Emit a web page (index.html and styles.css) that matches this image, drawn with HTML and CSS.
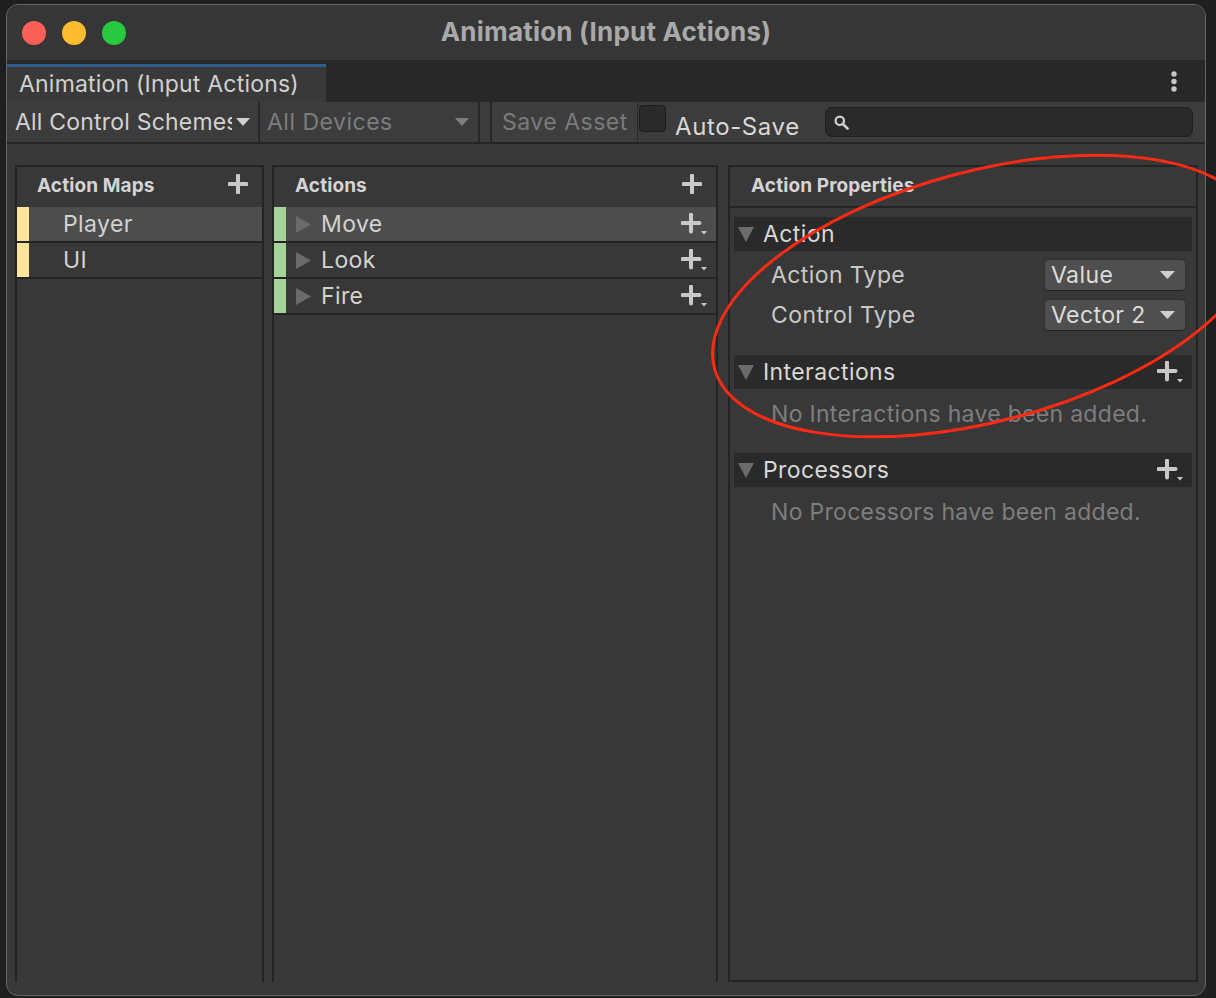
FILE: index.html
```html
<!DOCTYPE html>
<html lang="en">
<head>
<meta charset="utf-8">
<title>Animation (Input Actions)</title>
<link rel="stylesheet" href="styles.css">
</head>
<body>
<div class="window">
  <header class="titlebar">
    <div class="lights">
      <span class="light red"></span><span class="light yellow"></span><span class="light green"></span>
    </div>
    <div class="title">Animation (Input Actions)</div>
    <div></div>
  </header>

  <div class="tabbar">
    <div class="tab">Animation (Input Actions)</div>
    <svg class="kebab" width="6" height="21" viewBox="0 0 6 21"><circle cx="3" cy="3" r="2.7" fill="#c8c8c8"/><circle cx="3" cy="10.5" r="2.7" fill="#c8c8c8"/><circle cx="3" cy="18" r="2.7" fill="#c8c8c8"/></svg>
  </div>

  <div class="toolbar">
    <div class="tb-item schemes">
      <span class="tb-label">All Control Schemes</span>
      <svg class="arrow" width="14" height="8" viewBox="0 0 14 8"><polygon points="0,0 14,0 7,8" fill="#d0d0d0"/></svg>
    </div>
    <div class="tb-item devices">
      <span>All Devices</span>
      <svg class="arrow" width="14" height="8" viewBox="0 0 14 8"><polygon points="0,0 14,0 7,8" fill="#7e7e7e"/></svg>
    </div>
    <div class="tb-spacer"></div>
    <div class="tb-item save">Save Asset</div>
    <span class="checkbox"></span>
    <span class="autosave">Auto-Save</span>
    <div class="search">
      <svg width="15" height="15" viewBox="0 0 15 15"><circle cx="5.8" cy="5.8" r="4.2" fill="none" stroke="#cfcfcf" stroke-width="2.2"/><line x1="8.8" y1="8.8" x2="13.5" y2="13.5" stroke="#cfcfcf" stroke-width="2.6" stroke-linecap="round"/></svg>
    </div>
  </div>

  <div class="main">
    <section class="panel maps">
      <div class="panel-head">
        <span>Action Maps</span>
        <svg class="plus-head" width="20" height="20" viewBox="0 0 20 20"><path d="M10 1.5v17M1.5 10h17" stroke="#c8c8c8" stroke-width="4" stroke-linecap="round"/></svg>
      </div>
      <div class="row selected"><span class="strip map"></span><span class="map-label">Player</span></div>
      <div class="row"><span class="strip map"></span><span class="map-label">UI</span></div>
    </section>

    <section class="panel actions">
      <div class="panel-head">
        <span>Actions</span>
        <svg class="plus-head" width="20" height="20" viewBox="0 0 20 20"><path d="M10 1.5v17M1.5 10h17" stroke="#c8c8c8" stroke-width="4" stroke-linecap="round"/></svg>
      </div>
      <div class="row selected">
        <span class="strip act"></span>
        <svg class="fold-right" width="15" height="17" viewBox="0 0 15 17"><polygon points="0,0 15,8.5 0,17" fill="#6b6b6b"/></svg>
        <span class="act-label">Move</span>
        <svg class="plus-drop" width="26" height="22" viewBox="0 0 26 22"><path d="M10 1.5v17M1.5 10h17" stroke="#c8c8c8" stroke-width="4" stroke-linecap="round"/><polygon points="20,18 26,18 23,21.5" fill="#c8c8c8"/></svg>
      </div>
      <div class="row">
        <span class="strip act"></span>
        <svg class="fold-right" width="15" height="17" viewBox="0 0 15 17"><polygon points="0,0 15,8.5 0,17" fill="#6b6b6b"/></svg>
        <span class="act-label">Look</span>
        <svg class="plus-drop" width="26" height="22" viewBox="0 0 26 22"><path d="M10 1.5v17M1.5 10h17" stroke="#c8c8c8" stroke-width="4" stroke-linecap="round"/><polygon points="20,18 26,18 23,21.5" fill="#c8c8c8"/></svg>
      </div>
      <div class="row">
        <span class="strip act"></span>
        <svg class="fold-right" width="15" height="17" viewBox="0 0 15 17"><polygon points="0,0 15,8.5 0,17" fill="#6b6b6b"/></svg>
        <span class="act-label">Fire</span>
        <svg class="plus-drop" width="26" height="22" viewBox="0 0 26 22"><path d="M10 1.5v17M1.5 10h17" stroke="#c8c8c8" stroke-width="4" stroke-linecap="round"/><polygon points="20,18 26,18 23,21.5" fill="#c8c8c8"/></svg>
      </div>
    </section>

    <section class="panel props">
      <div class="panel-head props-head"><span>Action Properties</span></div>
      <div class="props-body">
        <div class="section">
          <div class="section-head">
            <svg class="fold-down" width="16" height="15" viewBox="0 0 16 15"><polygon points="0,0 16,0 8,15" fill="#6b6b6b"/></svg>
            <span>Action</span>
          </div>
          <div class="section-body fields">
            <div class="prop-row">
              <span>Action Type</span>
              <div class="dropdown"><span>Value</span><svg width="15" height="8" viewBox="0 0 15 8"><polygon points="0,0 15,0 7.5,8" fill="#cfcfcf"/></svg></div>
            </div>
            <div class="prop-row">
              <span>Control Type</span>
              <div class="dropdown"><span>Vector 2</span><svg width="15" height="8" viewBox="0 0 15 8"><polygon points="0,0 15,0 7.5,8" fill="#cfcfcf"/></svg></div>
            </div>
          </div>
        </div>
        <div class="section">
          <div class="section-head">
            <svg class="fold-down" width="16" height="15" viewBox="0 0 16 15"><polygon points="0,0 16,0 8,15" fill="#6b6b6b"/></svg>
            <span>Interactions</span>
            <svg class="plus-drop" width="26" height="22" viewBox="0 0 26 22"><path d="M10 1.5v17M1.5 10h17" stroke="#c8c8c8" stroke-width="4" stroke-linecap="round"/><polygon points="20,18 26,18 23,21.5" fill="#c8c8c8"/></svg>
          </div>
          <div class="msg">No Interactions have been added.</div>
        </div>
        <div class="section">
          <div class="section-head">
            <svg class="fold-down" width="16" height="15" viewBox="0 0 16 15"><polygon points="0,0 16,0 8,15" fill="#6b6b6b"/></svg>
            <span>Processors</span>
            <svg class="plus-drop" width="26" height="22" viewBox="0 0 26 22"><path d="M10 1.5v17M1.5 10h17" stroke="#c8c8c8" stroke-width="4" stroke-linecap="round"/><polygon points="20,18 26,18 23,21.5" fill="#c8c8c8"/></svg>
          </div>
          <div class="msg">No Processors have been added.</div>
        </div>
      </div>
    </section>
  </div>
</div>

<svg class="annotation" width="1216" height="998" viewBox="0 0 1216 998">
  <ellipse cx="985" cy="296" rx="280" ry="125" transform="rotate(-15 985 296)" fill="none" stroke="#ff2a14" stroke-width="3"/>
</svg>
</body>
</html>
```

FILE: styles.css
```css
* { box-sizing: border-box; }

html, body { margin: 0; padding: 0; }

body {
  width: 1216px;
  height: 998px;
  overflow: hidden;
  position: relative;
  background: #1f1f1f;
  font-family: Inter, "Noto Sans", "Liberation Sans", sans-serif;
  color: #d2d2d2;
  letter-spacing: 0.4px;
}

.window {
  margin: 4px 0 0 6px;
  width: 1200px;
  height: 992px;
  border: 1px solid #666666;
  border-radius: 12px;
  background: #383838;
  display: flex;
  flex-direction: column;
  overflow: hidden;
}

/* title bar */
.titlebar {
  height: 55px;
  flex: none;
  background: #363636;
  display: grid;
  grid-template-columns: 1fr auto 1fr;
  align-items: center;
}
.lights { display: flex; gap: 16px; padding-left: 15px; }
.light { width: 24px; height: 24px; border-radius: 50%; }
.red { background: #fe5f57; }
.yellow { background: #febc2e; }
.green { background: #28c840; }
.title {
  font-weight: 700;
  font-size: 26px;
  letter-spacing: 0.2px;
  color: #a9a9a9;
  padding-bottom: 3px;
}

/* tab bar */
.tabbar {
  height: 42px;
  flex: none;
  background: #282828;
  display: flex;
  align-items: flex-end;
  justify-content: space-between;
}
.tab {
  width: 319px;
  height: 38px;
  background: #393939;
  border-top: 3px solid #2f5d8c;
  padding-left: 12px;
  font-size: 23px;
  letter-spacing: 0.2px;
  line-height: 35px;
  color: #d0d0d0;
  white-space: nowrap;
}
.kebab { align-self: center; margin-right: 28px; }

/* toolbar */
.toolbar {
  height: 42px;
  flex: none;
  background: #3c3c3c;
  border-bottom: 2px solid #242424;
  display: flex;
  align-items: stretch;
  font-size: 23px;
  letter-spacing: 0.5px;
  white-space: nowrap;
}
.tb-item {
  display: flex;
  align-items: center;
  border-right: 2px solid #282828;
}
.schemes { width: 253px; padding: 0 8px; gap: 4px; color: #d2d2d2; letter-spacing: 0.2px; }
.tb-label { width: 217px; overflow: hidden; }
.devices {
  width: 220px;
  padding: 0 9px 0 7px;
  justify-content: space-between;
  color: #7c7c7c;
}
.tb-spacer { width: 12px; border-right: 2px solid #282828; }
.save {
  width: 146px;
  padding-left: 10px;
  color: #7a7a7a;
  background: #3e3e3e;
  border-right: 1px solid #2a2a2a;
}
.checkbox {
  align-self: flex-start;
  width: 27px;
  height: 27px;
  margin: 3px 0 0 1px;
  background: #2a2a2a;
  border: 1px solid #1d1d1d;
  border-radius: 4px;
}
.autosave {
  align-self: center;
  margin-left: 9px;
  padding-top: 8px;
  font-size: 24px;
  letter-spacing: 0.6px;
  color: #d8d8d8;
}
.search {
  align-self: center;
  margin: 0 12px 0 auto;
  width: 368px;
  height: 30px;
  background: #2a2a2a;
  border: 1px solid #1e1e1e;
  border-radius: 7px;
  display: flex;
  align-items: center;
  padding-left: 8px;
}

/* main */
.main {
  flex: 1;
  display: flex;
  padding: 21px 7px 13px 8px;
}
.panel {
  border: 2px solid #242424;
  border-bottom: none;
  background: #383838;
  display: flex;
  flex-direction: column;
}
.maps { width: 249px; margin-right: 8px; }
.actions { width: 446px; margin-right: 10px; }
.props { width: 470px; border-bottom: 2px solid #242424; }

.panel-head {
  height: 40px;
  flex: none;
  display: flex;
  align-items: center;
  justify-content: space-between;
  padding: 0 14px 3px 20px;
  font-weight: 700;
  font-size: 19px;
  letter-spacing: 0.1px;
  color: #d4d4d4;
}
.actions .panel-head { padding-left: 21px; }
.plus-head { margin-bottom: 4px; }

.row {
  height: 36px;
  flex: none;
  border-bottom: 2px solid #242424;
  display: flex;
  align-items: center;
  font-size: 23px;
  color: #d2d2d2;
}
.row.selected { background: #4d4d4d; }
.strip { width: 12px; align-self: stretch; flex: none; }
.strip.map { background: #fee49b; }
.strip.act { background: #a5d39b; }
.map-label { margin-left: 34px; }
.fold-right { margin-left: 10px; }
.act-label { margin-left: 10px; }
.plus-drop { margin-left: auto; }
.actions .plus-drop { margin-right: 9px; }

/* properties */
.props-head {
  height: 41px;
  border-bottom: 2px solid #242424;
  padding-left: 21px;
}
.props-body { padding: 9px 4px 0 4px; }
.section-head {
  height: 34px;
  background: #2a2a2a;
  display: flex;
  align-items: center;
  gap: 9px;
  padding: 0 9px 0 4px;
  font-size: 23px;
  color: #d8d8d8;
}
.fields {
  display: flex;
  flex-direction: column;
  gap: 8px;
  padding: 8px 0 24px 0;
}
.prop-row {
  height: 32px;
  display: flex;
  align-items: center;
  justify-content: space-between;
  padding: 0 6px 0 37px;
  font-size: 23px;
  color: #c8c8c8;
}
.dropdown {
  width: 142px;
  height: 32px;
  background: #4f4f4f;
  border: 1px solid #333333;
  border-bottom-color: #232323;
  border-radius: 5px;
  display: flex;
  align-items: center;
  justify-content: space-between;
  padding: 0 10px 0 6px;
  color: #dcdcdc;
}
.msg {
  padding: 14px 0 28px 37px;
  line-height: 22px;
  font-size: 23px;
  letter-spacing: 0.3px;
  color: #7e7e7e;
  white-space: nowrap;
}

/* annotation overlay */
.annotation {
  position: absolute;
  left: 0;
  top: 0;
  pointer-events: none;
}
```
